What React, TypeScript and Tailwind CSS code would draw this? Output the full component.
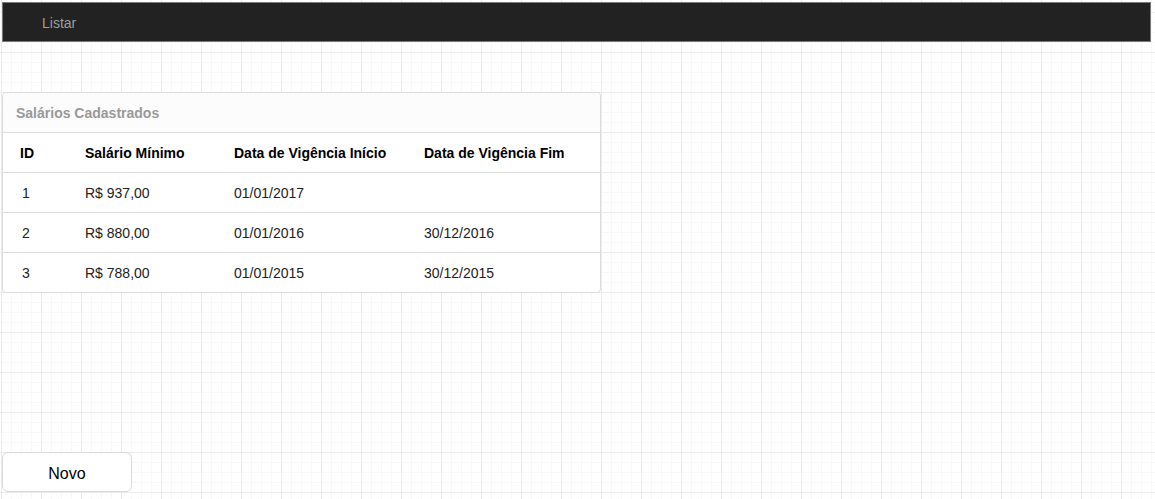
const rows = [
  { id: "1", valor: "R$ 937,00", inicio: "01/01/2017", fim: "" },
  { id: "2", valor: "R$ 880,00", inicio: "01/01/2016", fim: "30/12/2016" },
  { id: "3", valor: "R$ 788,00", inicio: "01/01/2015", fim: "30/12/2015" },
];

const cols = "grid grid-cols-[65px_149px_190px_1fr] items-center pt-[2px]";

export default function App() {
  return (
    <div
      className="min-h-screen w-full p-[2px] pr-[4px] font-['Liberation_Sans',Arial,sans-serif] text-[14px] text-[#222] bg-white bg-[image:linear-gradient(to_right,#ebebeb_1px,transparent_1px),linear-gradient(to_bottom,#ebebeb_1px,transparent_1px),linear-gradient(to_right,#f8f8f8_1px,transparent_1px),linear-gradient(to_bottom,#f8f8f8_1px,transparent_1px)] bg-[size:40px_40px,40px_40px,10px_10px,10px_10px] bg-[position:1px_12px]"
    >
      {/* Navbar */}
      <nav className="h-10 flex items-center bg-[#222] border border-[#7a7a7a] pl-[39px] pt-[2px]">
        <span className="text-[#9d9d9d] text-[14px]">Listar</span>
      </nav>

      {/* Panel */}
      <div className="mt-[50px] w-[599px] border border-[#dcdcdc] rounded-[4px] bg-white overflow-hidden">
        <div className="h-10 flex items-center px-[13px] pt-[2px] bg-[#fcfcfc] border-b border-[#dcdcdc] font-bold text-[#999]">
          Salários Cadastrados
        </div>
        <div className={`${cols} h-10 font-bold text-black border-b border-[#dcdcdc]`}>
          <div className="pl-[17px]">ID</div>
          <div className="pl-[17px]">Salário Mínimo</div>
          <div className="pl-[17px]">Data de Vigência Início</div>
          <div className="pl-[17px]">Data de Vigência Fim</div>
        </div>
        {rows.map((r, i) => (
          <div
            key={r.id}
            className={`${cols} ${i < rows.length - 1 ? "h-10 border-b border-[#dcdcdc]" : "h-[39px]"}`}
          >
            <div className="pl-[19px]">{r.id}</div>
            <div className="pl-[17px]">{r.valor}</div>
            <div className="pl-[17px]">{r.inicio}</div>
            <div className="pl-[17px]">{r.fim}</div>
          </div>
        ))}
      </div>

      {/* Novo */}
      <button className="mt-[159px] w-[130px] h-10 pt-[3px] bg-white border border-[#d9d9d9] rounded-[6px] text-[16px] text-black">
        Novo
      </button>
    </div>
  );
}
